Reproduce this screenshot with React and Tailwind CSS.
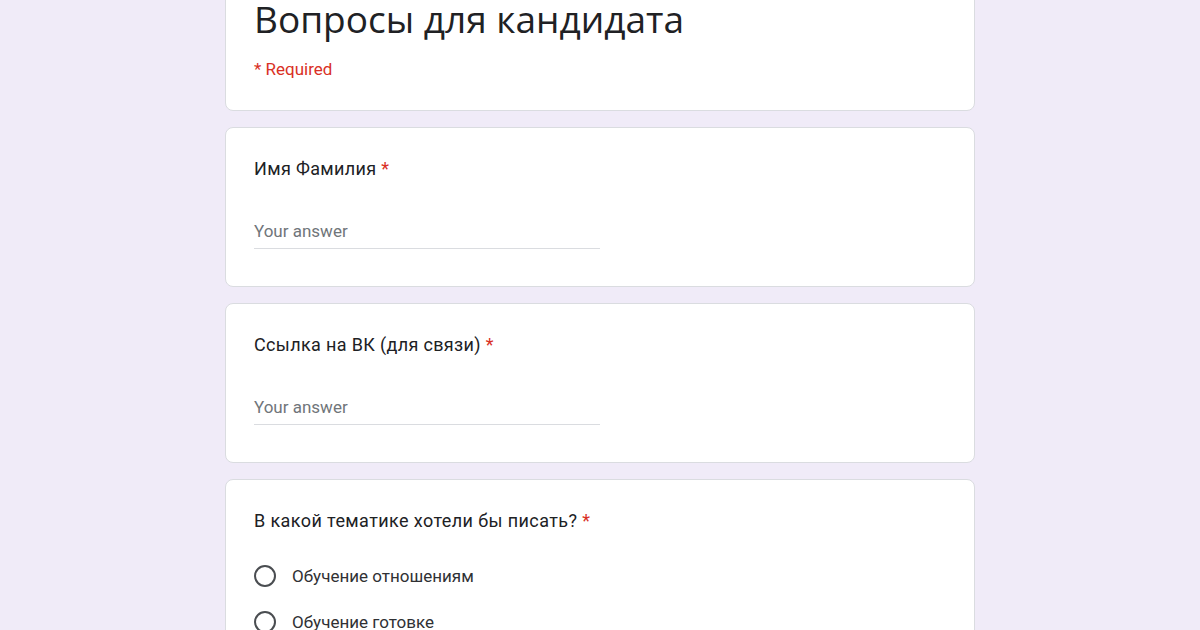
import React from "react";

const Star = () => <span className="text-[#d93025]"> *</span>;

const TextQuestion = ({ label }) => (
  <div className="bg-white border border-[#dadce0] rounded-lg h-[160px] px-[28px] pt-[28px]">
    <div className="text-[18px] text-[#202124] leading-[26px] tracking-[0.35px]">
      {label}
      <Star />
    </div>
    <div className="mt-[37px] w-[346px] border-b border-[#dadce0] pb-[5px] text-[17px] text-[#70757a] leading-[24px]">
      Your answer
    </div>
  </div>
);

const options = ["Обучение отношениям", "Обучение готовке"];

export default function App() {
  return (
    <div
      className="w-[1200px] h-[630px] overflow-hidden bg-[#f0ebf8]"
      style={{ fontFamily: "Roboto, 'Liberation Sans', sans-serif" }}
    >
      <div className="w-[750px] mx-auto flex flex-col gap-[16px] mt-[-40px]">
        <div className="bg-white border border-[#dadce0] rounded-lg h-[151px] px-[28px] pt-[34px]">
          <div className="text-[37px] leading-[48px] text-[#202124]" style={{ fontFamily: "'Open Sans', Roboto, sans-serif" }}>
            Вопросы для кандидата
          </div>
          <div className="mt-[14px] text-[17px] leading-[24px] text-[#d93025]">* Required</div>
        </div>
        <TextQuestion label="Имя Фамилия" />
        <TextQuestion label="Ссылка на ВК (для связи)" />
        <div className="bg-white border border-[#dadce0] rounded-lg h-[200px] px-[28px] pt-[28px]">
          <div className="text-[18px] text-[#202124] leading-[26px] tracking-[0.4px]">
            В какой тематике хотели бы писать?
            <Star />
          </div>
          <div className="mt-[31px] flex flex-col gap-[24px]">
            {options.map((o) => (
              <div key={o} className="flex items-center gap-[16px]">
                <div className="w-[22px] h-[22px] rounded-full border-2 border-[#4a4d51]" />
                <span className="text-[17px] text-[#303134] leading-[22px]">{o}</span>
              </div>
            ))}
          </div>
        </div>
      </div>
    </div>
  );
}
